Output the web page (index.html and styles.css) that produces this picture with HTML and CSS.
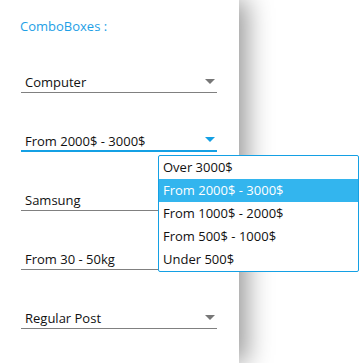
FILE: index.html
```html
<html>
  <head>
    <link rel="stylesheet" href="styles.css">
  </head>
  <body>
    <div class="panel">
      <div class="title">ComboBoxes :</div>
      <!-- category -->
      <div class="combo">
        <span class="value">Computer</span>
        <span class="arrow"></span>
      </div>
      <!-- price, opened -->
      <div class="combo active">
        <span class="value">From 2000$ - 3000$</span>
        <span class="arrow"></span>
      </div>
      <!-- brand -->
      <div class="combo">
        <span class="value">Samsung</span>
        <span class="arrow"></span>
      </div>
      <!-- weight -->
      <div class="combo">
        <span class="value">From 30 - 50kg</span>
        <span class="arrow"></span>
      </div>
      <!-- shipping -->
      <div class="combo">
        <span class="value">Regular Post</span>
        <span class="arrow"></span>
      </div>

      <ul class="dropdown">
        <li>Over 3000$</li>
        <li class="selected">From 2000$ - 3000$</li>
        <li>From 1000$ - 2000$</li>
        <li>From 500$ - 1000$</li>
        <li>Under 500$</li>
      </ul>
    </div>
  </body>
</html>
```

FILE: styles.css
```css
body{
  margin: 0;
  background-color: #fff;
  font-family: "Open Sans", "Noto Sans", sans-serif;
  font-size: 13px;
  color: #111;
  overflow: hidden;
}
.panel{
  position: relative;
  width: 239px;
  height: 100vh;
  box-sizing: border-box;
  padding: 18px 22px 0 21px;
  background-color: #fff;
  box-shadow: 8px 0 24px rgba(0, 0, 0, 0.4);
}
.title{
  color: #1ea0e6;
  line-height: 17px;
  margin-left: -1px;
  margin-bottom: 35px;
}
.combo{
  display: flex;
  align-items: flex-end;
  justify-content: space-between;
  box-sizing: border-box;
  height: 23px;
  padding: 0 2px 1px 4px;
  margin-bottom: 36px;
  border-bottom: 1px solid #808080;
}
.combo .value{
  line-height: 18px;
}
.arrow{
  width: 0;
  height: 0;
  margin-bottom: 7px;
  border-left: 5px solid transparent;
  border-right: 5px solid transparent;
  border-top: 5px solid #777;
}
.combo.active{
  border-bottom: 2px solid #14a0e4;
  padding-bottom: 0;
}
.combo.active .arrow{
  margin-bottom: 8px;
  border-top-color: #14a0e4;
}
.dropdown{
  position: absolute;
  left: 158px;
  top: 155px;
  width: 201px;
  margin: 0;
  padding: 0;
  list-style: none;
  box-sizing: border-box;
  background-color: #fff;
  border: 1px solid #14a0e4;
  border-radius: 2px;
}
.dropdown li{
  height: 23px;
  line-height: 22px;
  padding-left: 4px;
}
.dropdown li.selected{
  background-color: #33b5ee;
  color: #fff;
}
```
